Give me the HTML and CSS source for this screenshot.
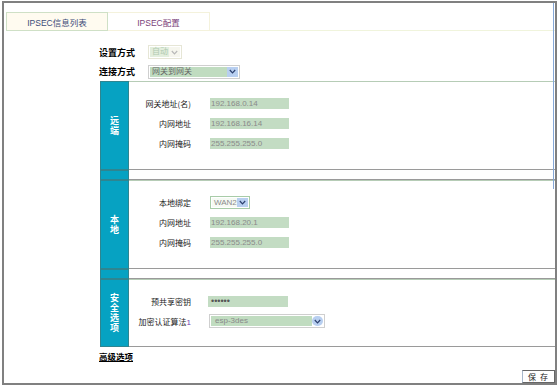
FILE: index.html
```html
<!DOCTYPE html>
<html lang="zh-CN">
<head>
    <meta charset="UTF-8">
    <title>IPSEC配置</title>
    <link rel="stylesheet" href="styles.css">
</head>
<body>
    <div class="frame">
        <div class="tabs">
            <div class="tab">IPSEC信息列表</div>
            <div class="tab active">IPSEC配置</div>
            <div class="tab-rest"></div>
        </div>

        <div class="form">
            <div class="top-row">
                <span class="top-label">设置方式</span>
                <div class="sel sel-off">
                    <span class="sel-val">自动</span>
                    <span class="sel-btn"><svg width="7" height="5" viewBox="0 0 7 5"><path d="M0.8 1 L3.5 3.8 L6.2 1" fill="none" stroke="#b8b8b8" stroke-width="1.2"/></svg></span>
                </div>
            </div>
            <div class="top-row second">
                <span class="top-label">连接方式</span>
                <div class="sel sel-mode">
                    <span class="sel-val">网关到网关</span>
                    <span class="sel-btn"><svg width="7" height="5" viewBox="0 0 7 5"><path d="M0.8 1 L3.5 3.8 L6.2 1" fill="none" stroke="#2b3f6e" stroke-width="1.2"/></svg></span>
                </div>
            </div>

            <div class="sec">
                <div class="side"><span class="side-text">远端</span></div>
                <div class="body">
                    <div class="fields">
                        <label>网关地址(名)</label><div class="inp">192.168.0.14</div>
                        <label>内网地址</label><div class="inp">192.168.16.14</div>
                        <label>内网掩码</label><div class="inp">255.255.255.0</div>
                    </div>
                </div>
            </div>
            <div class="strip"><div class="side"></div><div class="body"></div></div>

            <div class="sec">
                <div class="side"><span class="side-text">本地</span></div>
                <div class="body">
                    <div class="fields">
                        <label>本地绑定</label>
                        <div class="sel sel-wan">
                            <span class="sel-val">WAN2</span>
                            <span class="sel-btn"><svg width="7" height="5" viewBox="0 0 7 5"><path d="M0.8 1 L3.5 3.8 L6.2 1" fill="none" stroke="#2b3f6e" stroke-width="1.2"/></svg></span>
                        </div>
                        <label>内网地址</label><div class="inp">192.168.20.1</div>
                        <label>内网掩码</label><div class="inp">255.255.255.0</div>
                    </div>
                </div>
            </div>
            <div class="strip"><div class="side"></div><div class="body"></div></div>

            <div class="sec short">
                <div class="side"><span class="side-text">安全选项</span></div>
                <div class="body">
                    <div class="fields">
                        <label>预共享密钥</label><div class="inp pass">••••••</div>
                        <label>加密认证算法<span class="num">1</span></label>
                        <div class="sel sel-esp">
                            <span class="sel-val">esp-3des</span>
                            <span class="sel-btn"><svg width="7" height="5" viewBox="0 0 7 5"><path d="M0.8 1 L3.5 3.8 L6.2 1" fill="none" stroke="#2b3f6e" stroke-width="1.2"/></svg></span>
                        </div>
                    </div>
                </div>
            </div>

            <a class="adv">高级选项</a>
        </div>

        <div class="foot">
            <button class="save">保 存</button>
        </div>
    </div>
</body>
</html>
```

FILE: styles.css
```css
body {
    margin: 0;
    font-family: "Liberation Sans", "Noto Sans CJK SC", sans-serif;
    font-size: 8px;
    color: #333;
    background: #fff;
}
.frame {
    position: relative;
    box-sizing: border-box;
    width: 555px;
    height: 384px;
    margin: 1px 0 0 2px;
    border: 2px solid #808080;
    display: flex;
    flex-direction: column;
}
.frame::after {
    content: "";
    position: absolute;
    top: 0;
    right: 1px;
    width: 1px;
    height: 186px;
    background: #86a8d8;
}
.tabs {
    display: flex;
    margin: 9px 0 0 2px;
    height: 19px;
}
.tab {
    width: 102px;
    box-sizing: border-box;
    display: flex;
    align-items: center;
    justify-content: center;
    background: #fffbf0;
    border: 1px solid #cfe0c6;
    color: #3c4b78;
    font-size: 8.5px;
}
.tab.active {
    background: #fff;
    border-color: #f4f2dc;
    border-left: none;
    color: #7a3f7a;
}
.tab-rest {
    flex: 1;
    border-bottom: 1px solid #f0f4dc;
}
.form {
    margin: 11px 0 0 95px;
}
.top-row {
    display: flex;
    align-items: center;
    height: 20px;
}
.top-row.second {
    height: 19px;
}
.top-label {
    width: 49px;
    font-family: "Noto Sans CJK SC", sans-serif;
    font-size: 9px;
    font-weight: bold;
    color: #000;
}
.sel {
    display: flex;
    box-sizing: border-box;
    height: 14px;
    border: 1px solid #cfcfcf;
    padding: 1px;
    background: #fff;
}
.sel-val {
    flex: 1;
    background: #c0dcc0;
    color: #666;
    padding-left: 2px;
    line-height: 10px;
    white-space: nowrap;
}
.sel-btn {
    width: 11px;
    background: #b8cff0;
    display: flex;
    align-items: center;
    justify-content: center;
}
.sel-off {
    width: 34px;
    border-color: #e6e6d6;
}
.sel-off .sel-val {
    background: #e2eedd;
    color: #b0c9b0;
}
.sel-off .sel-btn {
    background: #f6f6ee;
}
.sel-mode {
    width: 92px;
}
.sel-wan {
    width: 40px;
    height: 13px;
    border-color: #a8cca8;
}
.sel-wan .sel-val {
    background: #f6faf4;
    color: #8a8a8a;
    line-height: 9px;
}
.sel-esp {
    width: 116px;
    margin-left: -1px;
}
.sel-esp .sel-val {
    color: #8a8a8a;
    padding-left: 4px;
}
.sel-esp .sel-btn {
    border-radius: 5px;
}
.sec,
.strip {
    display: flex;
    margin-left: 1px;
}
.sec {
    height: 89px;
}
.sec.short {
    height: 68px;
}
.strip {
    height: 10px;
}
.side {
    width: 29px;
    box-sizing: border-box;
    background: #06a2c2;
    border: 1px solid #2f8590;
    display: flex;
    align-items: center;
    justify-content: center;
}
.side-text {
    width: 10px;
    font-family: "Noto Sans CJK SC", sans-serif;
    font-size: 9px;
    line-height: 10px;
    font-weight: bold;
    color: #fff;
    text-align: center;
}
.body {
    flex: 1;
    box-sizing: border-box;
    border-top: 1px solid #b6ccb6;
    border-bottom: 1px solid #9a9a9a;
}
.strip .body {
    border-top: none;
}
.fields {
    display: grid;
    grid-template-columns: 62px max-content;
    grid-auto-rows: 20px;
    column-gap: 19px;
    align-items: center;
    padding-top: 11px;
}
.fields label {
    text-align: right;
    font-family: "Noto Sans CJK SC", sans-serif;
    font-size: 8px;
    color: #222;
    white-space: nowrap;
}
.num {
    color: #7040b0;
    font-family: "Liberation Sans", sans-serif;
}
.inp {
    width: 79px;
    height: 11px;
    box-sizing: border-box;
    background: #c3dcc3;
    color: #8a8a8a;
    line-height: 11px;
    padding-left: 1px;
}
.inp.pass {
    width: 80px;
    margin-left: -2px;
    color: #555;
    font-size: 9px;
    padding-left: 3px;
}
.adv {
    display: block;
    margin-top: 3px;
    font-family: "Noto Sans CJK SC", sans-serif;
    font-size: 8.5px;
    font-weight: bold;
    color: #000;
    text-decoration: underline;
}
.foot {
    margin-top: auto;
    display: flex;
    justify-content: flex-end;
}
.save {
    width: 33px;
    height: 13px;
    padding: 0;
    font-family: "Noto Sans CJK SC", sans-serif;
    font-size: 8px;
    line-height: 11px;
    letter-spacing: 1px;
    color: #222;
    background: #fff;
    border: 1px solid #666;
    border-left-color: #a8b8cc;
}
```
